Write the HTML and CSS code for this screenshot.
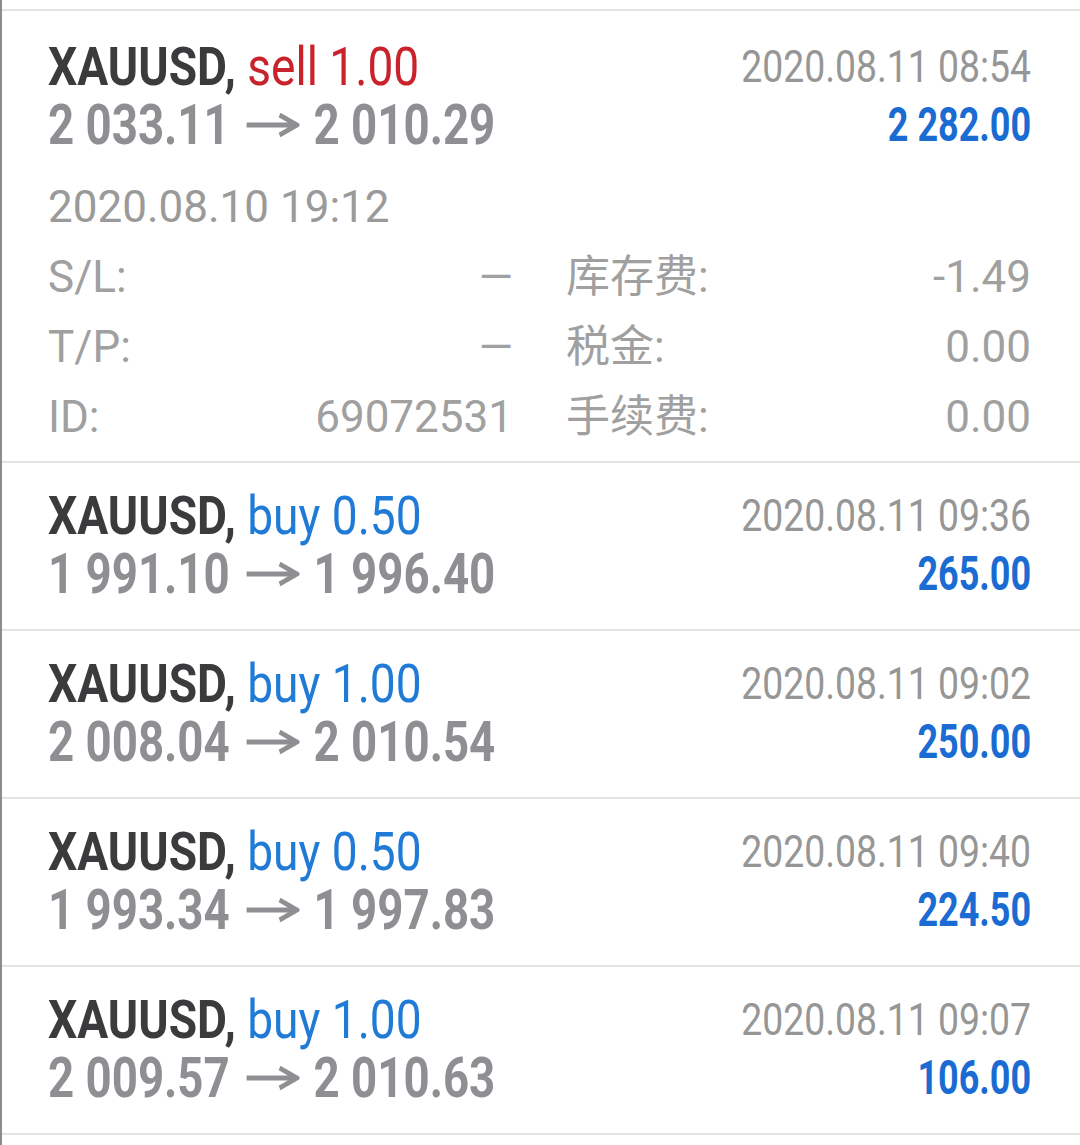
FILE: index.html
```html
<!DOCTYPE html>
<html lang="zh">
<head>
<meta charset="utf-8">
<title>History</title>
<link rel="stylesheet" href="styles.css">
</head>
<body>
<div class="screen">
  <div class="list">
    <div class="trade open">
      <div class="head">
        <div class="col left">
          <div class="line sym"><span class="pair">XAUUSD,</span> <span class="sell">sell 1.00</span></div>
          <div class="line prices">2 033.11<svg class="arrow" viewBox="0 0 64 24" aria-label="→"><path d="M0 12H60M40 2L61 12L40 22"/></svg>2 010.29</div>
        </div>
        <div class="col right">
          <div class="line time">2020.08.11 08:54</div>
          <div class="line amount">2 282.00</div>
        </div>
      </div>
      <div class="opened">2020.08.10 19:12</div>
      <div class="details">
        <div class="kv"><span>S/L:</span><span>—</span></div>
        <div class="kv"><span>库存费:</span><span>-1.49</span></div>
        <div class="kv"><span>T/P:</span><span>—</span></div>
        <div class="kv"><span>税金:</span><span>0.00</span></div>
        <div class="kv"><span>ID:</span><span>69072531</span></div>
        <div class="kv"><span>手续费:</span><span>0.00</span></div>
      </div>
    </div>
    <div class="trade">
      <div class="head">
        <div class="col left">
          <div class="line sym"><span class="pair">XAUUSD,</span> <span class="buy">buy 0.50</span></div>
          <div class="line prices">1 991.10<svg class="arrow" viewBox="0 0 64 24" aria-label="→"><path d="M0 12H60M40 2L61 12L40 22"/></svg>1 996.40</div>
        </div>
        <div class="col right">
          <div class="line time">2020.08.11 09:36</div>
          <div class="line amount">265.00</div>
        </div>
      </div>
    </div>
    <div class="trade">
      <div class="head">
        <div class="col left">
          <div class="line sym"><span class="pair">XAUUSD,</span> <span class="buy">buy 1.00</span></div>
          <div class="line prices">2 008.04<svg class="arrow" viewBox="0 0 64 24" aria-label="→"><path d="M0 12H60M40 2L61 12L40 22"/></svg>2 010.54</div>
        </div>
        <div class="col right">
          <div class="line time">2020.08.11 09:02</div>
          <div class="line amount">250.00</div>
        </div>
      </div>
    </div>
    <div class="trade">
      <div class="head">
        <div class="col left">
          <div class="line sym"><span class="pair">XAUUSD,</span> <span class="buy">buy 0.50</span></div>
          <div class="line prices">1 993.34<svg class="arrow" viewBox="0 0 64 24" aria-label="→"><path d="M0 12H60M40 2L61 12L40 22"/></svg>1 997.83</div>
        </div>
        <div class="col right">
          <div class="line time">2020.08.11 09:40</div>
          <div class="line amount">224.50</div>
        </div>
      </div>
    </div>
    <div class="trade">
      <div class="head">
        <div class="col left">
          <div class="line sym"><span class="pair">XAUUSD,</span> <span class="buy">buy 1.00</span></div>
          <div class="line prices">2 009.57<svg class="arrow" viewBox="0 0 64 24" aria-label="→"><path d="M0 12H60M40 2L61 12L40 22"/></svg>2 010.63</div>
        </div>
        <div class="col right">
          <div class="line time">2020.08.11 09:07</div>
          <div class="line amount">106.00</div>
        </div>
      </div>
    </div>
  </div>
</div>
</body>
</html>
```

FILE: styles.css
```css
html, body {
  margin: 0;
  padding: 0;
  background: #ffffff;
}

body {
  font-family: Roboto, "Noto Sans CJK SC", sans-serif;
  color: #9a9a9a;
}

.screen {
  min-height: 1145px;
  box-sizing: border-box;
  border-left: 2px solid #8c8c8c;
  padding-top: 9px;
}

.list {
  border-top: 2px solid #e2e2e2;
}

.trade {
  padding: 24px 49px 26px 46px;
  border-bottom: 2px solid #e2e2e2;
}

.trade.open {
  padding-top: 27px;
  padding-bottom: 9px;
}

.head {
  display: flex;
}

.col {
  flex: 1;
}

.line {
  height: 58px;
  line-height: 58px;
  white-space: nowrap;
}

.left .line {
  transform-origin: left center;
}

.right .line {
  text-align: right;
  transform-origin: right center;
}

.sym {
  font-size: 53px;
  transform: scaleX(0.87);
}

.pair {
  font-weight: 700;
  color: #3b3b3d;
}

.sell {
  color: #c9222b;
}

.buy {
  color: #1f7bd6;
}

.prices {
  font-size: 55px;
  font-weight: 700;
  color: #8f8f93;
  transform: scaleX(0.83);
}

.arrow {
  width: 64px;
  height: 24px;
  margin: 0 17px 0 20px;
  vertical-align: 7px;
  fill: none;
  stroke: currentColor;
  stroke-width: 5;
}

.time {
  font-size: 45px;
  color: #969696;
  transform: scaleX(0.83);
}

.amount {
  font-size: 48px;
  font-weight: 700;
  color: #1a6cd2;
  transform: scaleX(0.75);
}

.opened {
  margin-top: 18px;
  font-size: 44px;
  line-height: 70px;
  color: #9a9a9a;
}

.details {
  display: grid;
  grid-template-columns: 1fr 1fr;
  column-gap: 53px;
  font-size: 44px;
  line-height: 70px;
  color: #a0a0a0;
}

.kv {
  display: flex;
  justify-content: space-between;
  white-space: nowrap;
}
```
